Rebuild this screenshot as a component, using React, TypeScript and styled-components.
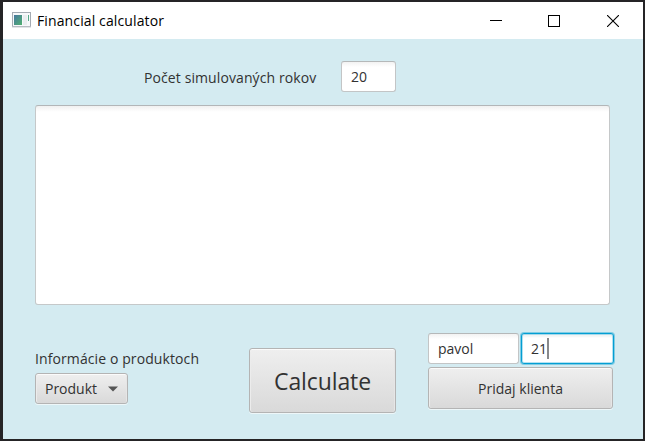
import React from 'react';
import styled, { createGlobalStyle, css } from 'styled-components';

const GlobalStyle = createGlobalStyle`
  * { box-sizing: border-box; }
  html, body { margin: 0; padding: 0; }
  body { background: #252526; overflow: hidden; }
  body, button, input, textarea {
    font-family: "Open Sans", "Noto Sans", sans-serif;
    font-size: 14px;
    line-height: 20px;
    color: #323232;
  }
`;

const Desktop = styled.div`
  width: 645px;
  height: 441px;
  padding: 2px 2px 2px 3px;
  background: #252426;
`;

const Window = styled.div`
  display: flex;
  flex-direction: column;
  height: 437px;
  background: #d4ebf1;
`;

const TitleBar = styled.header`
  display: flex;
  align-items: center;
  height: 37px;
  padding-left: 9px;
  background: #fff;
`;

const AppIcon = styled.svg`
  display: block;
  margin: 0 6px 1px 0;
`;

const Title = styled.span`
  flex: 1;
  letter-spacing: 0.12px;
  color: #000;
`;

const WindowControl = styled.button<{ $width?: number }>`
  display: flex;
  align-items: center;
  justify-content: center;
  width: ${(p) => p.$width ?? 58}px;
  height: 36px;
  padding: 0;
  border: 0;
  background: none;
`;

const Content = styled.main`
  display: flex;
  flex-direction: column;
  padding: 22px 27px 0 32px;
`;

const YearsRow = styled.div`
  display: flex;
  align-items: center;
  gap: 24px;
  height: 31px;
  padding-left: 109px;
`;

const Label = styled.label<{ $width: number }>`
  width: ${(p) => p.$width}px;
  letter-spacing: 0.1px;
  white-space: nowrap;
`;

const YearsLabel = styled(Label)`
  padding-top: 2px;
`;

const TextField = styled.input<{ $width: number }>`
  width: ${(p) => p.$width}px;
  height: 31px;
  padding: 0 9px;
  border: 1px solid #c3c5c6;
  border-top-color: #b5b8b9;
  border-radius: 3px;
  outline: 0;
  background: linear-gradient(#f2f2f2, #fff 5px);
`;

const Output = styled.textarea`
  display: block;
  width: 575px;
  height: 200px;
  margin-top: 13px;
  resize: none;
  border: 1px solid #c5c8c9;
  border-top-color: #b2b6b8;
  border-radius: 3px;
  outline: 0;
  background: linear-gradient(#f0f0f0, #fff 6px);
`;

const BottomRow = styled.div`
  display: flex;
  align-items: flex-start;
  padding-top: 27px;
`;

const Products = styled.section`
  flex: none;
  width: 214px;
  padding-top: 17px;
`;

const buttonFace = css`
  display: flex;
  flex: none;
  align-items: center;
  justify-content: center;
  padding: 0;
  border: 1px solid #b4b4b4;
  border-radius: 3px;
  background: linear-gradient(#efefef, #d9d9d9);
  box-shadow: inset 0 1px #fbfbfb, inset 1px 0 #ececec, inset -1px 0 #e6e6e6,
    0 1px rgba(255, 255, 255, 0.6);
`;

const MenuButton = styled.button`
  ${buttonFace}
  width: 93px;
  height: 31px;
  margin-top: 4px;
  gap: 11px;
`;

const CalculateButton = styled.button`
  ${buttonFace}
  width: 147px;
  height: 65px;
  margin-top: 16px;
  font-size: 23px;
  letter-spacing: -0.1px;
`;

const ClientForm = styled.section`
  flex: none;
  width: 186px;
  margin-left: 32px;
`;

const ClientFields = styled.div`
  display: flex;
  gap: 2px;
  padding-top: 1px;
`;

const FocusedField = styled.div`
  display: flex;
  align-items: center;
  width: 93px;
  height: 31px;
  padding-left: 9px;
  border: 1px solid #039ed3;
  border-radius: 3px;
  background: #fff;
  box-shadow: 0 0 0 1px rgba(3, 158, 211, 0.4), inset 0 0 0 1px rgba(3, 158, 211, 0.3),
    inset 0 3px 2px #f1f4f5;
`;

const Caret = styled.span`
  width: 2px;
  height: 21px;
  background: #88898b;
`;

const AddButton = styled.button`
  ${buttonFace}
  width: 185px;
  height: 42px;
  margin-top: 3px;
  padding-top: 2px;
`;

export default function App() {
  return (
    <Desktop>
      <GlobalStyle />
      <Window>
        <TitleBar>
          <AppIcon width="19" height="16" viewBox="0 0 19 16">
            <defs>
              <linearGradient id="screen" x1="0" y1="0" x2="1" y2="1">
                <stop offset="0" stopColor="#4878a0" />
                <stop offset="1" stopColor="#50b070" />
              </linearGradient>
            </defs>
            <rect x="0.5" y="0.5" width="18" height="14" fill="#f7f8fa" stroke="#a5abb3" />
            <path d="M0 15h19" stroke="#c8ccd1" />
            <rect x="2" y="3" width="8" height="10" fill="url(#screen)" />
            <rect x="11" y="3" width="4" height="10" fill="#e9edef" />
            <path d="M16.5 3v6" stroke="#57a988" />
          </AppIcon>
          <Title>Financial calculator</Title>
          <WindowControl aria-label="Minimize">
            <svg width="12" height="12" shapeRendering="crispEdges">
              <path d="M0 5.5h12" stroke="#000" />
            </svg>
          </WindowControl>
          <WindowControl aria-label="Maximize">
            <svg width="12" height="12">
              <rect x="0.5" y="0.5" width="11" height="11" fill="none" stroke="#000" />
            </svg>
          </WindowControl>
          <WindowControl $width={60} aria-label="Close">
            <svg width="12" height="12">
              <path d="M0 0l12 12M12 0L0 12" stroke="#000" strokeWidth="1.1" />
            </svg>
          </WindowControl>
        </TitleBar>
        <Content>
          <YearsRow>
            <YearsLabel $width={173}>Počet simulovaných rokov</YearsLabel>
            <TextField $width={55} defaultValue="20" />
          </YearsRow>
          <Output />
          <BottomRow>
            <Products>
              <Label $width={164}>Informácie o produktoch</Label>
              <MenuButton>
                Produkt
                <svg width="10" height="6">
                  <path d="M0 0.5h10L5 5.5z" fill="#555" />
                </svg>
              </MenuButton>
            </Products>
            <CalculateButton>Calculate</CalculateButton>
            <ClientForm>
              <ClientFields>
                <TextField $width={91} defaultValue="pavol" />
                <FocusedField role="textbox">
                  21
                  <Caret />
                </FocusedField>
              </ClientFields>
              <AddButton>Pridaj klienta</AddButton>
            </ClientForm>
          </BottomRow>
        </Content>
      </Window>
    </Desktop>
  );
}
